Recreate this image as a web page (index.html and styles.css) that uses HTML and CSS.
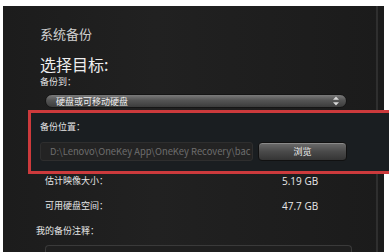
FILE: index.html
```html
<!DOCTYPE html>
<html lang="zh-CN">
<head>
    <meta charset="UTF-8">
    <title>系统备份</title>
    <link rel="stylesheet" href="styles.css">
</head>
<body>
    <div class="window">
        <div class="content">
            <p class="title">系统备份</p>
            <h2 class="heading">选择目标:</h2>
            <p class="label">备份到：</p>
            <div class="dropdown">
                <span>硬盘或可移动硬盘</span>
                <svg class="arrows" width="8" height="10" viewBox="0 0 8 10">
                    <path d="M4 0.5 L7 3.8 L1 3.8 Z" fill="#d8d8d8"/>
                    <path d="M4 9.5 L7 6.2 L1 6.2 Z" fill="#d8d8d8"/>
                </svg>
            </div>
            <div class="highlight">
                <p class="label">备份位置：</p>
                <div class="pathrow">
                    <div class="pathbox">D:\Lenovo\OneKey App\OneKey Recovery\bac</div>
                    <div class="browse">浏览</div>
                </div>
            </div>
            <div class="info">
                <span class="label">估计映像大小：</span>
                <span class="value">5.19 GB</span>
            </div>
            <div class="info second">
                <span class="label">可用硬盘空间：</span>
                <span class="value">47.7 GB</span>
            </div>
            <p class="label note">我的备份注释：</p>
            <div class="notebox"></div>
        </div>
        <div class="side"></div>
    </div>
</body>
</html>
```

FILE: styles.css
```css
body {
    margin: 0;
    background: #ffffff;
    overflow: hidden;
    font-family: "Noto Sans CJK SC", "Noto Sans", sans-serif;
}

.window {
    display: flex;
    margin: 6px 5px 0 3px;
    height: 246px;
    background: linear-gradient(90deg, #1c1c1c, #212121 40%, #1e1e1e 70%, #1b1b1b);
}

.content {
    flex: 1;
    padding: 20px 0 0 37px;
}

.side {
    width: 6px;
    border-left: 2px solid #2f2f2f;
}

.title {
    margin: 0;
    font-size: 13px;
    line-height: 16px;
    color: #cfcfcf;
}

.heading {
    margin: 12px 0 0;
    font-size: 16px;
    line-height: 20px;
    font-weight: normal;
    color: #eeeeee;
}

.label {
    margin: 0;
    font-size: 9px;
    line-height: 12px;
    color: #e6e6e6;
}

.heading + .label {
    margin-top: 2px;
}

.dropdown {
    display: flex;
    align-items: center;
    justify-content: space-between;
    margin: 6px 0 0 5px;
    width: 302px;
    height: 14px;
    box-sizing: border-box;
    padding: 0 6px 0 10px;
    border-radius: 7px;
    border: 1px solid #151515;
    background: linear-gradient(180deg, #7a7a7a, #545454 45%, #3c3c3c);
    font-size: 9px;
    color: #f2f2f2;
}

.arrows {
    display: block;
}

.highlight {
    position: relative;
    margin: 2px -30px 0 -12px;
    padding: 8px 0 10px 9px;
    border: 3px solid #cc3a3c;
    background: #1a1e21;
}

.pathrow {
    display: flex;
    margin-top: 9px;
}

.pathbox {
    width: 213px;
    height: 19px;
    box-sizing: border-box;
    padding-left: 9px;
    border: 1px solid #2e2e2e;
    border-radius: 3px;
    background: #232323;
    color: #6e6e6e;
    font-size: 9.4px;
    line-height: 17px;
    white-space: nowrap;
    overflow: hidden;
}

.browse {
    margin-left: 5px;
    width: 89px;
    height: 19px;
    box-sizing: border-box;
    border: 1px solid #111111;
    border-radius: 4px;
    background: linear-gradient(180deg, #6c6c6c, #4a4a4a 50%, #353535);
    box-shadow: inset 0 1px 0 #8a8a8a;
    color: #f0f0f0;
    font-size: 9px;
    line-height: 17px;
    text-align: center;
}

.info {
    display: flex;
    margin: 1px 0 0 5px;
    line-height: 12px;
}

.info.second {
    margin-top: 13px;
}

.info .label {
    width: 237px;
}

.value {
    font-family: "Open Sans", "Noto Sans", sans-serif;
    font-size: 10px;
    line-height: 12px;
    color: #e8e8e8;
}

.note {
    margin: 13px 0 0 -4px;
}

.notebox {
    margin: 8px 0 0 5px;
    width: 305px;
    height: 6px;
    border: 1px solid #3a3a3a;
    border-bottom: none;
    border-radius: 4px 4px 0 0;
    background: #1f1f1f;
}
```
